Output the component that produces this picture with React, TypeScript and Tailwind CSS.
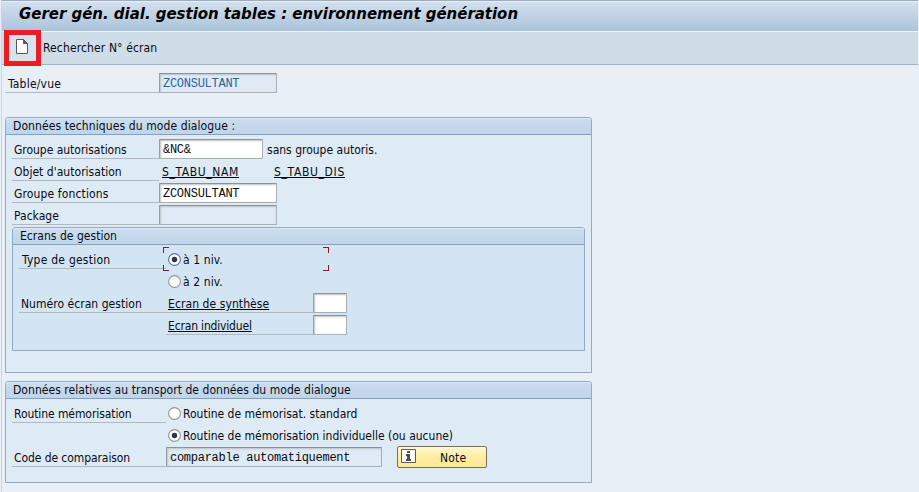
import type { ReactNode } from 'react';

function Text({ children, className = '' }: { children: ReactNode; className?: string }) {
  return <span className={`block whitespace-nowrap leading-[16px] ${className}`}>{children}</span>;
}

function Label({ children, className = '' }: { children?: ReactNode; className?: string }) {
  return <div className={`h-[22px] shrink-0 border-b border-[#b2b8bd] pt-[5px] ${className}`}>{children}</div>;
}

function Field({ value = '', className = '' }: { value?: string; className?: string }) {
  return (
    <div
      className={`h-[20px] shrink-0 whitespace-pre rounded-[1px] border border-[#a9afb3] border-t-[#8b9197] border-l-[#989ea3] pt-[2px] pl-[3px] font-['Liberation_Mono','Courier_New',monospace] text-[12px] leading-[16px] tracking-[-0.27px] shadow-[inset_1px_1px_2px_#bcc2c7] ${className}`}
    >
      {value}
    </div>
  );
}

function Row({ children }: { children: ReactNode }) {
  return <div className="flex h-[22px] items-end">{children}</div>;
}

function Panel({ title, children, className = '' }: { title: ReactNode; children: ReactNode; className?: string }) {
  return (
    <section className={`rounded-t-[3px] border border-[#91aac6] ${className}`}>
      <header className="h-[17px] rounded-t-[2px] border-b border-[#829fbd] bg-linear-to-b from-[#cddded] to-[#bed5ea] pl-[7px] shadow-[inset_0_1px_0_#dfe9f3]">
        {title}
      </header>
      <div className="pt-[2px]">{children}</div>
    </section>
  );
}

function Radio({ checked = false, focused = false }: { checked?: boolean; focused?: boolean }) {
  return (
    <svg className="mb-px h-[14px] w-[14px] shrink-0" viewBox="0 0 14 14">
      <circle cx="6.5" cy="6.5" r="5.9" fill="#fff" stroke={focused ? '#4d78ab' : '#8f9396'} strokeWidth="1.1" />
      {checked && <circle cx="6.5" cy="6.5" r="2.7" fill="#33344a" />}
    </svg>
  );
}

export default function App() {
  return (
    <div className="h-[492px] w-[919px] overflow-hidden bg-[#e8eff7] font-['DejaVu_Sans_Condensed','DejaVu_Sans',sans-serif] text-[12px] tracking-[0.03px] text-[#080c12]">
      <div className="ml-px h-[492px] border-l border-[#c9d5e0]">
        <header className="mr-px flex h-[32px] border-t border-b border-t-[#9badc1] border-b-[#edf3f9] bg-linear-to-b from-[#d5e1ee] to-[#abc3da] pt-[3px] pl-[17px] shadow-[inset_0_1px_0_#e6eef6]">
          <h1 className="whitespace-nowrap font-['DejaVu_Sans',sans-serif] text-[15px] leading-[20px] font-bold tracking-[-0.03px] italic text-black">
            Gerer gén. dial. gestion tables : environnement génération
          </h1>
        </header>
        <nav className="mr-px flex h-[33px] border-b border-[#a3b3c3] bg-[#cfdde8]">
          <button className="-mt-[2px] ml-[2px] flex h-[36px] w-[37px] shrink-0 items-start border-[5px] border-[#ed1c24] bg-[#d8e2ed] pt-[4px] pl-[7px]">
            <svg className="h-[15px] w-[12px]" viewBox="0 0 12 15">
              <path d="M0.5 0.5H7.5L11.5 4.5V14.5H0.5Z" fill="#fff" stroke="#59595b" />
              <path d="M7.5 0.5L11.5 4.5H7.5Z" fill="#59595b" stroke="#59595b" />
            </svg>
          </button>
          <Text className="mt-[8px] ml-[2px] tracking-[0.13px]">Rechercher N° écran</Text>
        </nav>
        <main className="pl-[3px]">
          <div className="flex h-[28px] items-end">
            <Label className="w-[154px] pl-[3px]"><Text className="tracking-[0.2px]">Table/vue</Text></Label>
            <Field value="ZCONSULTANT" className="w-[118px] bg-[#dfeaf4] text-[#2566a2]" />
          </div>

          <Panel className="mt-[24px] h-[256px] w-[587px] bg-[#deeaf4]" title={<Text className="tracking-[0.1px]">Données techniques du mode dialogue :</Text>}>
            <div className="pl-[6px]">
              <Row>
                <Label className="w-[147px] pl-[2px]"><Text className="tracking-[-0.03px]">Groupe autorisations</Text></Label>
                <Field value="&NC&" className="w-[104px] bg-white" />
                <Text className="mb-px ml-[4px] tracking-[0px]">sans groupe autoris.</Text>
              </Row>
              <Row>
                <Label className="w-[147px] pl-[2px]"><Text>Objet d'autorisation</Text></Label>
                <Text className="mb-px ml-[3px] w-[112px] tracking-[0.62px] underline underline-offset-1">S_TABU_NAM</Text>
                <Text className="mb-px tracking-[0.66px] underline underline-offset-1">S_TABU_DIS</Text>
              </Row>
              <Row>
                <Label className="w-[147px] pl-[2px]"><Text className="tracking-[0.13px]">Groupe fonctions</Text></Label>
                <Field value="ZCONSULTANT" className="w-[118px] bg-white" />
              </Row>
              <Row>
                <Label className="w-[147px] pl-[2px]"><Text>Package</Text></Label>
                <Field className="w-[118px] bg-[#dfeaf4]" />
              </Row>
              <Panel className="mt-[2px] h-[124px] w-[573px] bg-[#d3e4f2]" title={<Text>Ecrans de gestion</Text>}>
                <div className="pl-[6px]">
                  <Row>
                    <Label className="w-[147px] pl-[3px]"><Text className="tracking-[0.24px]">Type de gestion</Text></Label>
                    <div className="relative -mb-[2px] -ml-[3px] flex h-[24px] w-[166px] items-end pb-[3px] pl-[5px]">
                      <Radio checked focused />
                      <Text className="ml-px tracking-[0.1px]">à 1 niv.</Text>
                      <i className="absolute top-0 left-0 h-[6px] w-[6px] border-t border-l border-[#8b1a22]" />
                      <i className="absolute top-0 right-0 h-[6px] w-[6px] border-t border-r border-[#8b1a22]" />
                      <i className="absolute bottom-0 left-0 h-[6px] w-[6px] border-b border-l border-[#8b1a22]" />
                      <i className="absolute right-0 bottom-0 h-[6px] w-[6px] border-r border-b border-[#8b1a22]" />
                    </div>
                  </Row>
                  <Row>
                    <div className="flex items-end pb-px pl-[149px]">
                      <Radio />
                      <Text className="ml-px tracking-[0.1px]">à 2 niv.</Text>
                    </div>
                  </Row>
                  <Row>
                    <Label className="w-[147px] pl-[2px]"><Text className="tracking-[0.04px]">Numéro écran gestion</Text></Label>
                    <Label className="w-[147px] pl-[2px]"><Text className="tracking-[0.08px] underline underline-offset-1">Ecran de synthèse</Text></Label>
                    <Field className="w-[34px] bg-white" />
                  </Row>
                  <Row>
                    <Label className="ml-[147px] w-[147px] pl-[2px]"><Text className="tracking-[-0.17px] underline underline-offset-1">Ecran individuel</Text></Label>
                    <Field className="w-[34px] bg-white" />
                  </Row>
                </div>
              </Panel>
            </div>
          </Panel>

          <Panel className="mt-[8px] h-[102px] w-[587px] bg-[#deeaf4]" title={<Text className="tracking-[0.05px]">Données relatives au transport de données du mode dialogue</Text>}>
            <div className="pl-[6px]">
              <Row>
                <Label className="w-[154px] pl-[2px]"><Text className="tracking-[-0.08px]">Routine mémorisation</Text></Label>
                <div className="flex items-end pb-px pl-[2px]">
                  <Radio />
                  <Text className="ml-px tracking-[0px]">Routine de mémorisat. standard</Text>
                </div>
              </Row>
              <Row>
                <div className="flex items-end pb-px pl-[156px]">
                  <Radio checked />
                  <Text className="ml-px tracking-[0px]">Routine de mémorisation individuelle (ou aucune)</Text>
                </div>
              </Row>
              <Row>
                <Label className="w-[154px] pl-[2px]"><Text className="tracking-[-0.08px]">Code de comparaison</Text></Label>
                <Field value="comparable automatiquement" className="w-[216px] bg-[#dfeaf4]" />
                <button className="-mb-px ml-[15px] flex h-[22px] w-[90px] shrink-0 rounded-[2px] border border-[#77705c] bg-linear-to-b from-[#fff8d2] via-[#ffeda2] to-[#fde890] pt-[2px] pl-[3px]">
                  <svg className="h-[15px] w-[15px]" viewBox="0 0 15 15">
                    <path d="M0.5 0.5H14.5V13.5H0.5Z" fill="#fff" stroke="#5a5a5a" />
                    <path d="M6 2H9V4H6ZM5 5H9V10H10V12H5V10H6V7H5Z" fill="#4f4f4f" />
                  </svg>
                  <Text className="mt-px ml-[24px] tracking-[0.2px]">Note</Text>
                </button>
              </Row>
            </div>
          </Panel>
        </main>
      </div>
    </div>
  );
}
